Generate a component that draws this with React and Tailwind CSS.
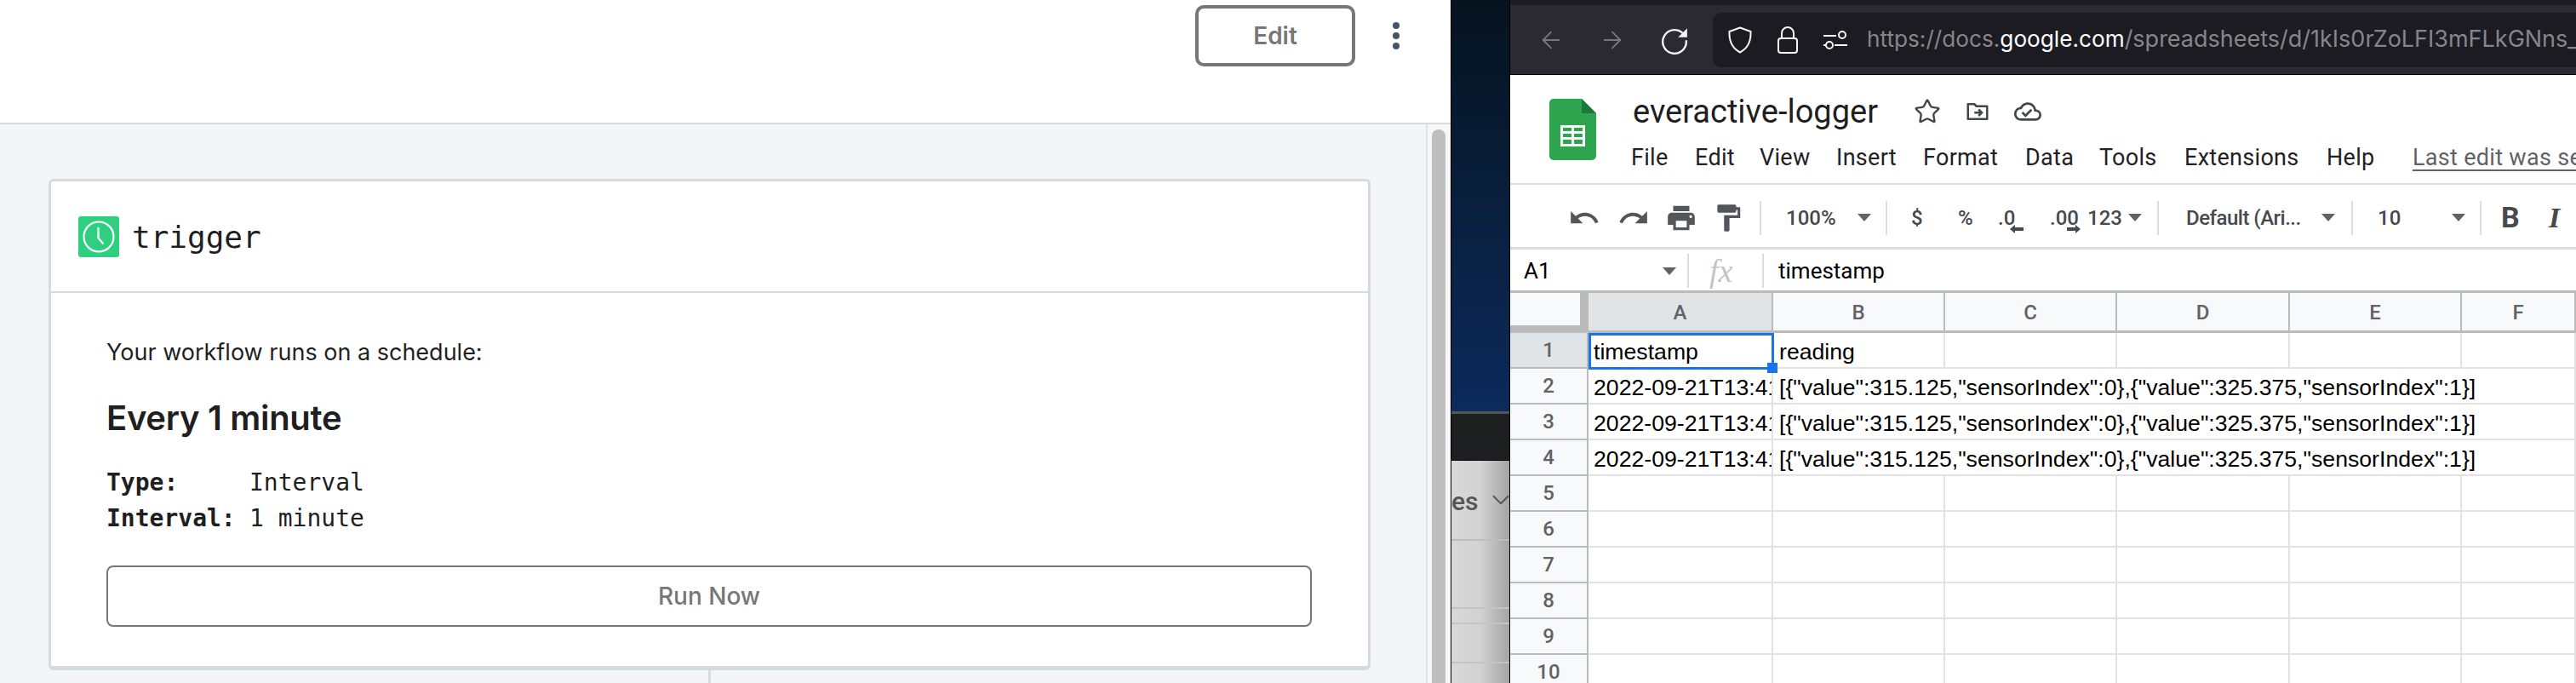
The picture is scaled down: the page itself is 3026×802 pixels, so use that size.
import { ArrowLeft, ArrowRight, Star, ChevronDown } from "lucide-react";

const COLS = ["A", "B", "C", "D", "E", "F"];
const ROWS = [1, 2, 3, 4, 5, 6, 7, 8, 9, 10];
const READING = '[{"value":315.125,"sensorIndex":0},{"value":325.375,"sensorIndex":1}]';

function Caret({ className }) {
  return (
    <svg viewBox="0 0 16 9" className={`w-[16px] h-[9px] shrink-0 text-[#5f6368] ${className}`}>
      <path d="M0 0h16L8 9z" fill="currentColor" />
    </svg>
  );
}

function Sep({ className }) {
  return <div className={`w-[2px] h-[40px] shrink-0 bg-[#dadce0] ${className}`} />;
}

function MIcon({ d, className }) {
  return (
    <svg viewBox="0 0 24 24" className={`w-[38px] h-[38px] shrink-0 text-[#53565b] ${className}`}>
      <path d={d} fill="currentColor" />
    </svg>
  );
}

function LeftWindow() {
  return (
    <div className="w-[1704px] h-full shrink-0 flex flex-col font-['Inter',sans-serif]">
      <div className="h-[146px] shrink-0 bg-white border-b-[2px] border-[#d5dae1] flex items-start justify-end pt-[6px] pr-[60px]">
        <button className="w-[188px] h-[72px] border-[4px] border-[#777777] rounded-[10px] text-[28px] font-semibold text-[#777777] flex items-center justify-center">
          Edit
        </button>
        <div className="ml-[44px] mt-[20px] flex flex-col gap-[4px]">
          <div className="w-[8px] h-[8px] rounded-full bg-[#475569]" />
          <div className="w-[8px] h-[8px] rounded-full bg-[#475569]" />
          <div className="w-[8px] h-[8px] rounded-full bg-[#475569]" />
        </div>
      </div>
      <div className="flex-1 flex min-h-0">
        <div className="flex-1 bg-[#f4f5f7] pl-[57px] pt-[64px] overflow-hidden">
          <div className="w-[1553px] h-[577px] bg-white border-[3px] border-b-[5px] border-[#d5dae1] rounded-[6px] flex flex-col">
            <div className="h-[131px] shrink-0 border-b-[2px] border-[#d5dae1] flex items-center pl-[32px]">
              <div className="w-[48px] h-[48px] rounded-[3px] bg-[#2fcf80] flex items-center justify-center">
                <svg viewBox="0 0 40 40" className="w-[40px] h-[40px]" fill="none" stroke="white">
                  <circle cx="20" cy="20" r="17.5" strokeWidth="2.2" />
                  <path d="M19.5 9v12.5l6 7" strokeWidth="2.2" />
                </svg>
              </div>
              <span className="ml-[15px] mt-[3px] text-[36px] text-[#1f1f1f] font-['DejaVu_Sans_Mono',monospace]">trigger</span>
            </div>
            <div className="pl-[65px] pr-[66px] flex flex-col">
              <p className="mt-[50px] text-[27px] leading-[40px] text-[#1f1f1f]">Your workflow runs on a schedule:</p>
              <h2 className="mt-[32px] text-[40px] leading-[50px] font-semibold tracking-[-0.3px] text-[#1f1f1f]">Every 1 minute</h2>
              <div className="mt-[30px] font-['DejaVu_Sans_Mono',monospace] text-[28px] leading-[42px] text-[#1f1f1f]">
                <div className="flex">
                  <span className="w-[168px] font-bold">Type:</span>
                  <span>Interval</span>
                </div>
                <div className="flex">
                  <span className="w-[168px] font-bold">Interval:</span>
                  <span>1 minute</span>
                </div>
              </div>
              <button className="mt-[34px] h-[72px] border-[2px] border-[#777777] rounded-[8px] text-[28px] font-medium text-[#777777]">
                Run Now
              </button>
            </div>
          </div>
          <div className="ml-[775px] w-[3px] h-[20px] bg-[#d5dae1]" />
        </div>
        <div className="w-[29px] shrink-0 bg-[#f7f7f7] border-l-[2px] border-[#e3e3e3] pl-[5px] pt-[6px]">
          <div className="w-[16px] h-[700px] rounded-t-full bg-[#bebebe]" />
        </div>
      </div>
    </div>
  );
}

function DesktopGap() {
  return (
    <div className="w-[70px] h-full shrink-0 flex flex-col border-x border-black">
      <div className="h-[483px] shrink-0 bg-gradient-to-b from-[#06131f] to-[#0c2a5c]" />
      <div className="h-[58px] shrink-0 bg-[#1d1f21] border-t-[3px] border-[#555555] border-b border-b-black" />
      <div className="flex-1 bg-gradient-to-r from-[#d8d8d8] via-[#d2d2d2] to-[#a4a4a4] flex flex-col overflow-hidden">
        <div className="h-[94px] shrink-0 border-b-[2px] border-[#bdbdbd] flex items-start pt-[30px] overflow-hidden">
          <span className="text-[30px] leading-[36px] font-medium text-[#555555] font-['Roboto',sans-serif]">es</span>
          <ChevronDown className="ml-[9px] -mt-[1px] w-[34px] h-[34px] text-[#555555] shrink-0" strokeWidth={1.3} />
        </div>
        <div className="h-[80px] shrink-0 border-b-[2px] border-[#c4c4c4]" />
        <div className="h-[18px] shrink-0 border-b-[2px] border-[#c4c4c4]" />
        <div className="h-[46px] shrink-0 border-b-[2px] border-[#c4c4c4]" />
      </div>
    </div>
  );
}

function BrowserBar() {
  return (
    <div className="h-[88px] shrink-0 bg-[#2b2a33] border-t-[6px] border-t-[#1c1c20] border-b-[1px] border-b-black flex items-center pl-[32px]">
      <ArrowLeft className="w-[32px] h-[32px] text-[#77767d] shrink-0" strokeWidth={1.4} />
      <ArrowRight className="ml-[40px] w-[32px] h-[32px] text-[#77767d] shrink-0" strokeWidth={1.4} />
      <svg viewBox="0 0 32 32" className="ml-[40px] w-[34px] h-[34px] shrink-0" fill="none" stroke="#f4f4f5" strokeWidth="2.2">
        <path d="M26 9.5A13 13 0 1 0 29 17" strokeLinecap="round" />
        <path d="M30 3v10H20z" fill="#f4f4f5" stroke="none" />
      </svg>
      <div className="ml-[28px] flex-1 h-[64px] rounded-l-[10px] bg-[#1c1b22] flex items-center pl-[18px] overflow-hidden">
        <svg viewBox="0 0 28 32" className="w-[28px] h-[32px] shrink-0" fill="none" stroke="#f4f4f5" strokeWidth="2">
          <path d="M14 1.500 26.500 6c.5 10-2 19-12.500 24.500C3.500 25 1 16 1.500 6z" strokeLinejoin="round" />
        </svg>
        <svg viewBox="0 0 24 32" className="ml-[30px] w-[24px] h-[32px] shrink-0" fill="none" stroke="#f4f4f5" strokeWidth="2">
          <rect x="1" y="14" width="22" height="17" rx="3" />
          <path d="M5 14V8a7 7 0 0 1 14 0v6" />
        </svg>
        <svg viewBox="0 0 28 22" className="ml-[30px] w-[28px] h-[22px] shrink-0" fill="none" stroke="#f4f4f5" strokeWidth="2">
          <path d="M0 6h15M0 17h4M13 17h15" />
          <circle cx="22" cy="5" r="4" />
          <circle cx="7" cy="17" r="4" />
        </svg>
        <span className="ml-[23px] text-[26.2px] whitespace-nowrap text-[#86858c] font-['Inter',sans-serif]">
          https://docs.<span className="text-white">google.com</span>
          <span className="text-[27px]">/spreadsheets/d/1kIs0rZoLFI3mFLkGNns_</span>
        </span>
      </div>
    </div>
  );
}

function SheetHeader() {
  const menu = [
    ["File", "w-[75px]"],
    ["Edit", "w-[76px]"],
    ["View", "w-[90px]"],
    ["Insert", "w-[102px]"],
    ["Format", "w-[120px]"],
    ["Data", "w-[87px]"],
    ["Tools", "w-[100px]"],
    ["Extensions", "w-[167px]"],
    ["Help", "w-[101px]"],
  ];
  return (
    <div className="h-[129px] shrink-0 bg-white border-b-[2px] border-[#dadce0] flex pl-[46px] pt-[28px] font-['Roboto',sans-serif] overflow-hidden">
      <svg viewBox="0 0 55 72" className="w-[55px] h-[72px] shrink-0">
        <path d="M5 0h33l17 17v50a5 5 0 0 1-5 5H5a5 5 0 0 1-5-5V5a5 5 0 0 1 5-5z" fill="#2ea44f" />
        <path d="M38 0v17h17z" fill="#1b7a3a" />
        <path d="M13 31h29v25H13zm3 3v4h10v-4zm13 0v4h10v-4zm-13 7v4h10v-4zm13 0v4h10v-4zm-13 7v5h10v-5zm13 0v5h10v-5z" fill="white" fillRule="evenodd" />
      </svg>
      <div className="ml-[41px] flex flex-col">
        <div className="flex items-center h-[30px]">
          <span className="ml-[2px] text-[38px] leading-[30px] w-[330px] text-[#1f1f1f]">everactive-logger</span>
          <Star className="w-[32px] h-[32px] text-[#444746] shrink-0" strokeWidth={1.8} />
          <svg viewBox="0 0 24 24" className="ml-[28px] w-[30px] h-[30px] shrink-0" fill="none" stroke="#444746" strokeWidth="2">
            <path d="M3 5h6l2 2h10v12H3z" strokeLinejoin="round" />
            <path d="M9 13h7m-3-3 3 3-3 3" />
          </svg>
          <svg viewBox="0 0 24 24" className="ml-[28px] w-[32px] h-[32px] shrink-0 text-[#444746]">
            <path
              fill="currentColor"
              d="M19.35 10.04C18.67 6.59 15.64 4 12 4 9.11 4 6.6 5.64 5.35 8.04 2.34 8.36 0 10.91 0 14c0 3.31 2.69 6 6 6h13c2.76 0 5-2.24 5-5 0-2.64-2.05-4.78-4.65-4.96zM19 18H6c-2.21 0-4-1.79-4-4 0-2.05 1.53-3.76 3.56-3.97l1.07-.11.5-.95C8.08 7.14 9.94 6 12 6c2.62 0 4.88 1.86 5.39 4.43l.3 1.5 1.53.11c1.56.1 2.78 1.41 2.78 2.96 0 1.65-1.35 3-3 3zm-9-3.82L7.91 12.09 6.5 13.5 10 17l6.01-6.01-1.41-1.41z"
            />
          </svg>
        </div>
        <div className="mt-[21px] flex items-center text-[27px] leading-[36px] text-[#1f2125] tracking-[0.3px] whitespace-nowrap">
          {menu.map(([label, width]) => (
            <span key={label} className={`${width} shrink-0`}>
              {label}
            </span>
          ))}
          <span className="text-[#5f6368] underline underline-offset-[5px]">Last edit was seconds ago</span>
        </div>
      </div>
    </div>
  );
}

function Toolbar() {
  return (
    <div className="h-[76px] shrink-0 bg-white border-b-[3px] border-[#dadce0] flex items-center pl-[68px] pt-[4px] text-[24px] font-medium text-[#46494e] font-['Roboto',sans-serif] overflow-hidden whitespace-nowrap">
      <MIcon d="M12.5 8c-2.65 0-5.05.99-6.9 2.6L2 7v9h9l-3.62-3.62c1.39-1.16 3.16-1.88 5.12-1.88 3.54 0 6.55 2.31 7.6 5.5l2.37-.78C21.08 11.03 17.15 8 12.5 8z" />
      <MIcon className="ml-[20px]" d="M18.4 10.6C16.55 8.99 14.15 8 11.5 8c-4.65 0-8.58 3.03-9.96 7.22L3.9 16c1.05-3.19 4.05-5.5 7.6-5.5 1.95 0 3.73.72 5.12 1.88L13 16h9V7l-3.6 3.6z" />
      <MIcon className="ml-[18px]" d="M19 8H5c-1.66 0-3 1.34-3 3v6h4v4h12v-4h4v-6c0-1.66-1.34-3-3-3zm-3 11H8v-5h8v5zm3-7c-.55 0-1-.45-1-1s.45-1 1-1 1 .45 1 1-.45 1-1 1zm-1-9H6v4h12V3z" />
      <MIcon className="ml-[17px]" d="M18 4V3c0-.55-.45-1-1-1H5c-.55 0-1 .45-1 1v4c0 .55.45 1 1 1h12c.55 0 1-.45 1-1V6h1v4H9v11c0 .55.45 1 1 1h2c.55 0 1-.45 1-1v-9h8V4h-3z" />
      <Sep className="ml-[18px]" />
      <span className="ml-[29px] w-[84px] shrink-0">100%</span>
      <Caret />
      <Sep className="ml-[17px]" />
      <span className="ml-[28px] w-[55px] shrink-0">$</span>
      <span className="w-[47px] shrink-0">%</span>
      <span className="relative w-[61px] shrink-0">
        .0
        <svg viewBox="0 0 16 10" className="absolute left-[14px] top-[26px] w-[16px] h-[10px]">
          <path d="M0 5l6-5v3h10v4H6v3z" fill="currentColor" />
        </svg>
      </span>
      <span className="relative w-[44px] shrink-0">
        .00
        <svg viewBox="0 0 16 10" className="absolute left-[20px] top-[26px] w-[16px] h-[10px]">
          <path d="M16 5l-6-5v3H0v4h10v3z" fill="currentColor" />
        </svg>
      </span>
      <span className="w-[48px] shrink-0">123</span>
      <Caret />
      <Sep className="ml-[18px]" />
      <span className="ml-[32px] w-[159px] shrink-0 tracking-[-0.5px]">Default (Ari...</span>
      <Caret />
      <Sep className="ml-[19px]" />
      <span className="ml-[29px] w-[87px] shrink-0">10</span>
      <Caret />
      <Sep className="ml-[17px]" />
      <span className="ml-[23px] w-[56px] shrink-0 text-[34px] font-bold">B</span>
      <span className="text-[34px] font-bold italic font-['Liberation_Serif',serif]">I</span>
    </div>
  );
}

function FormulaBar() {
  return (
    <div className="h-[48px] shrink-0 bg-white flex items-center pl-[16px] pt-[2px] font-['Roboto',sans-serif] text-[26px] text-black overflow-hidden">
      <span className="w-[163px] shrink-0">A1</span>
      <Caret className="w-[14px] h-[8px]" />
      <Sep className="ml-[13px]" />
      <span className="ml-[24px] w-[62px] shrink-0 text-[38px] leading-[40px] italic text-[#c4c4c4] font-['Liberation_Serif',serif]">fx</span>
      <Sep className="h-[34px]" />
      <span className="ml-[17px]">timestamp</span>
    </div>
  );
}

function SheetGrid() {
  return (
    <div className="flex-1 min-h-0 overflow-hidden border-t-[3px] border-[#bbbbbb] grid grid-cols-[92px_217px_202px_202px_203px_202px_1fr] grid-rows-[47px_repeat(10,42px)] font-['Liberation_Sans',sans-serif] text-[26.67px] text-black">
      <div className="bg-[#f8f9fa] border-r-[10px] border-b-[9px] border-[#bbbbbb]" />
      {COLS.map((col) => (
        <div
          key={col}
          className={`pt-[2px] border-r-[2px] border-b-[3px] border-[#bbbbbb] flex items-center justify-center text-[24px] font-['Roboto',sans-serif] font-medium text-[#5f6368] ${
            col === "A" ? "bg-[#e1e4e7]" : "bg-[#f8f9fa]"
          }`}
        >
          {col}
        </div>
      ))}
      {ROWS.map((row) => {
        const hasData = row > 1 && row < 5;
        return (
          <div key={row} className="contents">
            <div
              className={`border-r-[2px] border-b-[2px] border-[#bbbbbb] flex items-center justify-center text-[24px] font-['Roboto',sans-serif] font-medium text-[#5f6368] ${
                row === 1 ? "bg-[#e1e4e7]" : "bg-[#f8f9fa]"
              }`}
            >
              {row}
            </div>
            {COLS.map((col) => (
              <div
                key={col}
                className={`pt-[3px] border-b-[2px] border-[#e2e2e2] flex items-center whitespace-nowrap ${
                  hasData && col !== "A" && col !== "F" ? "" : "border-r-[2px]"
                } ${col === "A" ? "overflow-hidden pl-[6px]" : "pl-[7px]"}`}
              >
                {row === 1 && col === "A" && "timestamp"}
                {row === 1 && col === "B" && "reading"}
                {hasData && col === "A" && "2022-09-21T13:41"}
                {hasData && col === "B" && READING}
              </div>
            ))}
          </div>
        );
      })}
    </div>
  );
}

export default function App() {
  return (
    <div className="w-[3026px] h-[802px] flex overflow-hidden bg-white">
      <LeftWindow />
      <DesktopGap />
      <div className="flex-1 min-w-0 h-full flex flex-col relative">
        <BrowserBar />
        <SheetHeader />
        <Toolbar />
        <FormulaBar />
        <SheetGrid />
        <div className="absolute left-[92px] top-[391px] w-[218px] h-[43px] border-[3px] border-[#1a73e8] pointer-events-none" />
        <div className="absolute left-[302px] top-[426px] w-[12px] h-[12px] bg-[#1a73e8] pointer-events-none" />
      </div>
    </div>
  );
}
